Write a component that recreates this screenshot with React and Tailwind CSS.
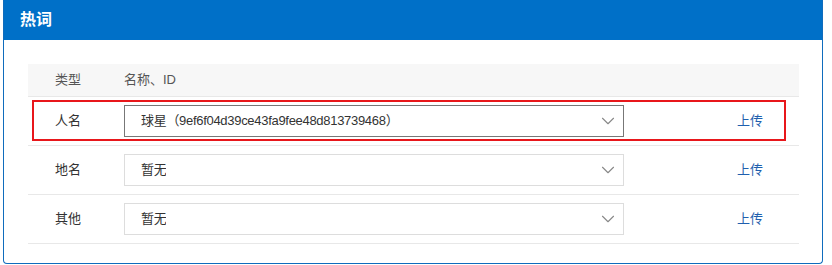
import { ChevronDown } from "lucide-react";

const rows = [
  { type: "人名", value: "球星（9ef6f04d39ce43fa9fee48d813739468）", active: true },
  { type: "地名", value: "暂无" },
  { type: "其他", value: "暂无" },
];

const font = { fontFamily: '"Liberation Sans", "Noto Sans CJK SC", sans-serif' };

const Row = ({ type, value, active }) => (
  <div className="relative flex items-center h-[49px] border-b border-[#e8e8e8] text-[13px] text-[#333]">
    <div className="w-[96px] pl-[27px] shrink-0">{type}</div>
    <div
      className={`w-[500px] h-[32px] flex items-center justify-between pl-[16px] pr-[4px] bg-white border ${
        active ? "border-[#777]" : "border-[#ddd]"
      }`}
    >
      <span className="truncate tracking-[-0.3px]">{value}</span>
      <ChevronDown size={22} strokeWidth={1.2} className="text-[#888]" />
    </div>
    <div className="ml-[113px] text-[#1f5fae] cursor-pointer">上传</div>
    {active && (
      <div className="absolute left-[4px] top-[3px] w-[754px] h-[41px] border-2 border-[#e8171b] pointer-events-none" />
    )}
  </div>
);

export default function App() {
  return (
    <div className="w-[832px] h-[265px] bg-white" style={font}>
      <div className="ml-[3px] w-[820px] h-[264px] border-x border-b border-[#0f6cbd] rounded-b-[4px] overflow-hidden">
        <div className="h-[40px] bg-[#0070c8] flex items-center pl-[17px] -mx-px">
          <h3 className="text-white font-bold text-[16px]">热词</h3>
        </div>
        <div className="pl-[24px] pr-[23px] pt-[24px]">
          <div className="flex items-center h-[33px] bg-[#f7f7f7] border-b border-[#e8e8e8] text-[13px] text-[#555]">
            <div className="w-[96px] pl-[27px]">类型</div>
            <div>名称、ID</div>
          </div>
          {rows.map((r) => (
            <Row key={r.type} {...r} />
          ))}
        </div>
      </div>
    </div>
  );
}
